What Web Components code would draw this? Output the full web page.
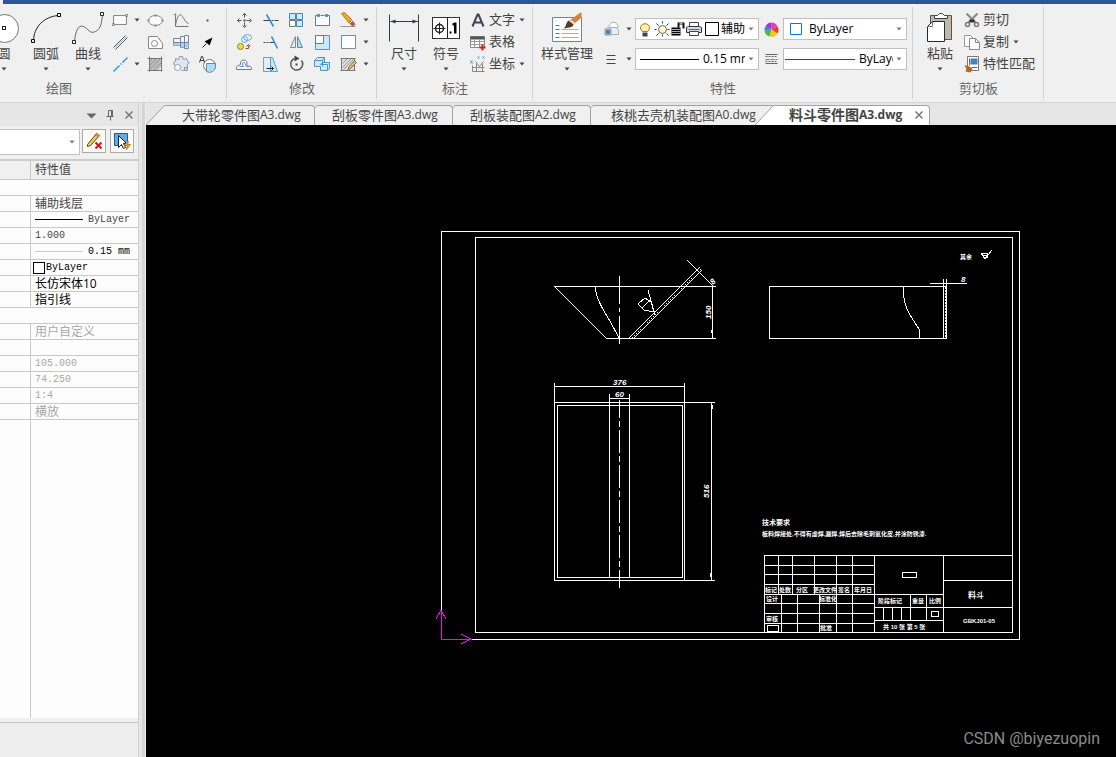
<!DOCTYPE html>
<html lang="zh-CN">
<head>
<meta charset="utf-8">
<title>料斗零件图A3.dwg</title>
<style>
html,body{margin:0;height:100%}
body{font-family:"Open Sans","Noto Sans CJK SC",sans-serif;font-size:13px;color:#444;background:#f0f0f0}
</style>
</head>
<body>
<cad-app></cad-app>
<script>
const ICONS = {
/* large ribbon icons, 32 x 32 */
circle:[32,`<circle cx="16" cy="16" r="14" fill="#fff" stroke="#777"/><rect x="14" y="14" width="3" height="3" fill="#fff" stroke="#222"/>`],
arc:[32,`<path d="M3 29C3 14 14 4 28 3" fill="none" stroke="#222"/><path d="M1 27h3v3h-3zM27 1h3v3h-3z" fill="#fff" stroke="#000"/>`],
curve:[32,`<path d="M2 29C3 18 6 12 11 14s6 8 12 5S29 9 30 3" fill="none" stroke="#666"/><path d="M0 28h3v3h-3zM28 0h3v3h-3z" fill="#fff" stroke="#222"/>`],
dimension:[32,`<path d="M1 2v27M30 2v27M2 9h28" fill="none" stroke="#333c50"/><path d="M2 9l5-2v4zM29 9l-5-2v4z" fill="#333c50"/>`],
symbol:[32,`<rect x="2" y="5" width="27" height="21" fill="#fff" stroke="#333"/><path d="M17 5v21M3 16h12M9 10v12" stroke="#222"/><circle cx="9" cy="16" r="4" fill="none" stroke="#222" stroke-width="1.5"/><path d="M19 19h2v2h-2zM24 10h2v11h-2.500v-8h-1.500v-2z" fill="#000"/>`],
style:[32,`<path d="M1 5h29v24h-29z" fill="#fff" stroke="#6684a8"/><path d="M4 13h4M4 17h4M4 21h4M4 25h4" stroke="#58779c"/><path d="M10 17h17M10 21h17M10 25h17" stroke="#9eaecb"/><path d="M18 8L29 0l1 1v4l-8 7z" fill="#d8813b"/><path d="M17 8l5 4-1 2-3 1-6 1c3-2 2-5 5-8z" fill="#5f351d"/><path d="M19 8l4 3" stroke="#dce4ea" stroke-width="2"/>`],
paste:[32,`<path d="M6 3h21v24H6z" fill="#c1b8a8" stroke="#555"/><path d="M10 3h3l2-2h3l2 2h3v3H10z" fill="#fff" stroke="#444"/><path d="M8 9h12v20H3V14z" fill="#fff" stroke="#222c40"/><path d="M8 9v5H3" fill="none" stroke="#777"/>`],
/* small icons, 20 x 20 */
rect:[20,`<path d="M3 5h13v9H3z" fill="#fafafa" stroke="#888"/><path d="M15 4h2v2h-2zM2 13h2v2H2z" fill="#fff" stroke="#888"/>`],
dline:[20,`<path d="M3 15L15 3M5 17L17 5" stroke="#555b66"/><path d="M4 16L16 4" stroke="#bbb"/>`],
axis:[20,`<path d="M3 17l6-6M10 10l1-1M12 8l5-5" stroke="#1fa6e0" stroke-width="1.500"/>`],
ellipse:[20,`<ellipse cx="10" cy="10" rx="7" ry="5" fill="#fafafa" stroke="#888"/><path d="M9 4h2v2H9zM2 9h2v2H2zM9 14h2v2H9zM16 9h2v2h-2z" fill="#888"/>`],
hole:[20,`<path d="M3 4h9l5 7v5H3z" fill="#fff" stroke="#888"/><circle cx="9" cy="11" r="3" fill="#fff" stroke="#888"/>`],
hatch:[20,`<path d="M4 4h12v8l-4 4H4z" fill="#bbb"/><path d="M4 7l3-3M4 11l7-7M4 15l11-11M8 16l8-8" stroke="#999"/><path d="M2 4h15M2 16h15M4 2v15M16 2v15" stroke="#777"/>`],
wave:[20,`<path d="M4 3v13h13" fill="none" stroke="#777"/><path d="M4 15C6 3 9 3 11 6s3 6 6 7" fill="none" stroke="#777"/><path d="M2 4h3" stroke="#999"/>`],
shaft:[20,`<path d="M2 6h7V4h4V3h4v13h-4v-1H9v-2H2z" fill="#eef4fa" stroke="#77869a"/><path d="M2 10h15v5h-8l-1-2H2z" fill="#acd0ef"/><path d="M2 10h15M9 5v10M13 4v12" stroke="#77869a"/>`],
gear:[20,`<path d="M3 11l-1-3 2-1V4l3 1 1-3h3l1 3 3-1 1 3 2 1-2 2v3h-3v3h-3" fill="#dfe4f2" stroke="#929aaa"/><circle cx="6" cy="13" r="3" fill="#fff" stroke="#929aaa"/><path d="M13 13h3v3h-3z" fill="#cfd6e6" stroke="#929aaa"/>`],
point:[20,`<path d="M9 9h2v2H9z" fill="#555b6a"/>`],
arrow:[20,`<path d="M5 15l4-4" stroke="#222"/><path d="M15 5l-3 8-2-2-3-2z" fill="#000"/>`],
detail:[20,`<circle cx="12" cy="11" r="6" fill="#fff" stroke="#777"/><path d="M9 9h9v3a6 6 0 0 1-9 5z" fill="#ade0f6" stroke="#6688a8"/><path d="M2 8L4 2h1l2 6M3 6h3" fill="none" stroke="#333"/>`],
move:[20,`<path d="M10 3v4M10 12v4M3 10h4M12 10h4M8 5l2-2 2 2M8 15l2 2 2-2M5 8l-2 2 2 2M15 8l2 2-2 2" fill="none" stroke="#555"/><path d="M9 9h2v2H9z" fill="#444"/>`],
trim:[20,`<path d="M3 10h7M11 10h2M14 10h4" stroke="#444"/><path d="M6 4l7 12" stroke="#1d8fe0" stroke-width="1.500"/>`],
extend:[20,`<path d="M3 10h2M6 10h2M9 10h5" stroke="#444"/><path d="M11 4l6 12" stroke="#1d8fe0" stroke-width="1.500"/>`],
array:[20,`<path d="M3 3h6v6H3zM10 3h6v6h-6zM10 10h6v6h-6z" fill="#cdecfb" stroke="#3b8bc0"/><path d="M3 10h6v6H3z" fill="#fff" stroke="#777"/>`],
brk:[20,`<path d="M5 5H3v10h14V5h-2M8 5h4" fill="#fff" stroke="#777"/><path d="M5 4h2v2H5zM13 4h2v2h-2z" fill="#2f96e0" stroke="#2f96e0"/>`],
erase:[20,`<path d="M2 16h15" stroke="#999"/><path d="M3 3l3-1 8 8-3 3z" fill="#f2aa25" stroke="#b97a14"/><path d="M11 10l4 1 2 3-3 2-3-3z" fill="#a95b55"/><path d="M11 13l3-3" stroke="#eee"/>`],
copy3:[20,`<circle cx="6" cy="14" r="3" fill="#f7e800" stroke="#777"/><ellipse cx="10" cy="7" rx="3" ry="3" fill="#dff4ff" stroke="#67a9d0"/><ellipse cx="13" cy="5" rx="4" ry="3" fill="none" stroke="#67a9d0"/><path d="M11 16h3v-3M12 14l2-2 2 2" fill="none" stroke="#b33"/>`],
mirror:[20,`<path d="M9 4v11H4z" fill="#e9e9e9" stroke="#888"/><path d="M11 4v11h5z" fill="#b5dcf2" stroke="#5c8ba8"/>`],
scale:[20,`<path d="M3 3h14v14H3z" fill="#c9eafa" stroke="#4e97c2"/><path d="M3 3h8v8H3z" fill="#fff" stroke="#777"/>`],
stretch:[20,`<path d="M3 3h14v13H3z" fill="#fff" stroke="#889"/><path d="M3 3h14M3 3v13" stroke="#3c9de0" stroke-dasharray="2 1"/>`],
offset:[20,`<path d="M2 15h15c1-4-4-3-5-4 3-6-7-8-6-1-2 1-5 1-4 5z" fill="#eef6ff" stroke="#778"/><path d="M5 12h4c-3-4 1-6 2-2 0 2 2 3 3 2" fill="none" stroke="#4e97c2"/>`],
chamfer:[20,`<path d="M3 3h7v14H3z" fill="#ddeffc" stroke="#999"/><path d="M10 3h2l5 14h-7z" fill="#c9e9fb" stroke="#4ca4dc"/><path d="M6 14h7M11 12l2 2-2 2" fill="none" stroke="#222"/>`],
rotate:[20,`<path d="M8 4a6 6 0 1 0 7 2" fill="none" stroke="#555" stroke-width="1.500"/><path d="M8 1l5 3-5 3z" fill="#444"/><path d="M9 9h2v2H9z" fill="#444"/>`],
block:[20,`<path d="M2 6l3-3h7v5h5v6l-2 2H8v-4H2z" fill="#c9eafa" stroke="#4e97c2"/><path d="M2 6h8v6M8 10l2-2h7M8 10h7v6M10 6l2-3" fill="none" stroke="#4e97c2"/>`],
hedit:[20,`<path d="M3 4h13v12H3z" fill="#ddd" stroke="#777"/><path d="M4 9l5-5M4 13l9-9M5 15l11-11M9 15l7-7" stroke="#999"/><path d="M2 4h15M2 16h15" stroke="#777"/><path d="M10 13l6-7 2 2-6 6-2 1z" fill="#f0bd57" stroke="#765"/>`],
bigA:[20,`<path d="M4 16L9 4h1l5 12M6 12h7" fill="none" stroke="#3b4557" stroke-width="2"/>`],
table:[20,`<path d="M2 4h14v11H2z" fill="#fff" stroke="#888"/><path d="M2 4h14v3H2z" fill="#555"/><path d="M2 9h14M2 12h14M6 7v8M11 7v8" stroke="#999"/><path d="M11 15h6M14 12v6" stroke="#c22" stroke-width="2"/>`],
coord:[20,`<path d="M4 11v6h12M8 9v8M14 9v8M4 13h12M7 7l4 5 4-5" fill="none" stroke="#888"/><path d="M2 6l2 3M4 6l-2 3M9 2l2 2M11 2l-2 2M14 2l2 2M16 2l-2 2" stroke="#4699d0"/>`],
layers:[20,`<path d="M6 8l4-5h4l3 4-4 4H8z" fill="#fff" stroke="#a8adb5"/><path d="M7 8h8l2 3v4h-7" fill="#eee" stroke="#a8adb5"/><path d="M3 9h7v7H3z" fill="#8aa6c0"/><path d="M5 11h3v3H5z" fill="#3476a8"/>`],
lines:[20,`<path d="M5 6h9M5 10h9M5 14h9" stroke="#444"/>`],
wheel:[20,`<path d="M10 10L10 3A7 7 0 0 1 16 7z" fill="#e83ab4"/><path d="M10 10L4 7A7 7 0 0 1 10 3z" fill="#9d39d8"/><path d="M10 10L16 7A7 7 0 0 1 16 14z" fill="#e83b30"/><path d="M10 10L16 14A7 7 0 0 1 8 17z" fill="#f7c51c"/><path d="M10 10L8 17A7 7 0 0 1 3 11z" fill="#4fba42"/><path d="M10 10L3 11A7 7 0 0 1 4 7z" fill="#3182df"/>`],
dashes:[20,`<path d="M4 5h12M4 14h12" stroke="#666"/><path d="M4 7h12M4 12h12" stroke="#666" stroke-dasharray="2 1"/><path d="M4 10h12" stroke="#777" stroke-dasharray="4 1"/>`],
cut:[20,`<path d="M4 3l9 9M15 3l-9 9" stroke="#888" stroke-width="2"/><path d="M7 9h5v3H7z" fill="#333"/><circle cx="5" cy="14" r="2" fill="none" stroke="#777" stroke-width="1.500"/><circle cx="14" cy="14" r="2" fill="none" stroke="#777" stroke-width="1.500"/>`],
copy:[20,`<path d="M2 3h6l3 3v8H2z" fill="#fff" stroke="#999"/><path d="M7 6h6l4 4v7H7z" fill="#fff" stroke="#889"/><path d="M13 6v4h4" fill="none" stroke="#889"/>`],
match:[20,`<path d="M5 2h11v14H5z" fill="#fff" stroke="#777"/><path d="M8 4h7v6H8z" fill="#477fb8"/><path d="M7 4v7M9 13h6" stroke="#667"/><path d="M2 11h3l5 3-2 4-5-1 1-3z" fill="#b9651b"/>`],
bulb:[20,`<path d="M7 12C5 10 5 9 5 7a5 5 0 0 1 9 0c0 2 0 3-2 5z" fill="#ffefa8" stroke="#8c7a43"/><path d="M7 13h5v4H7z" fill="#444"/>`],
sun:[20,`<circle cx="10" cy="10" r="4" fill="#fff6cc" stroke="#666"/><path d="M10 2v2M10 15v2M2 10h2M15 10h2M4 4l2 2M14 14l2 2M16 4l-2 2M6 14l-2 2" stroke="#333"/>`],
lock:[20,`<path d="M3 8h9v8H3z" fill="#000"/><path d="M3 10h9M3 12h9M3 14h9" stroke="#c8be00"/><path d="M10 8V4h5v5" fill="none" stroke="#111" stroke-width="2"/><path d="M11 4h3" stroke="#d8cd00"/>`],
printer:[20,`<path d="M5 3h9v4H5z" fill="#fff" stroke="#444"/><path d="M2 8l2-1h11l2 1v5H2z" fill="#d4d8df" stroke="#333"/><path d="M5 12h9v4H5z" fill="#fff" stroke="#444"/><path d="M4 10h11" stroke="#667"/>`],
white:[20,`<path d="M3 3h13v13H3z" fill="#fff" stroke="#000"/>`],
blue:[20,`<path d="M4 4h11v11H4z" fill="#fff" stroke="#0078d7"/>`],
pen:[20,`<path d="M3 13L12 2l3 2-9 10-3 1z" fill="#f4cb4d" stroke="#5d461c"/><path d="M11 4l2-2 3 2-2 2z" fill="#c08a6a"/><path d="M11 11l6 6M17 11l-6 6" stroke="#d01818" stroke-width="2"/>`],
pick:[20,`<path d="M2 2h13v12H2z" fill="#62aae8" stroke="#1c5d9e"/><path d="M6 4v12l3-3 2 4 2-1-2-4h3z" fill="#fff" stroke="#222"/><path d="M15 10l-3 4h3l-1 4 4-5h-3l1-3z" fill="#ffc23b" stroke="#c07a10"/>`],
down:[20,`<path d="M5 8h10l-5 5z" fill="#666"/>`],
pin:[20,`<path d="M8 5h4v6H8zM6 11h7M10 11v4" fill="none" stroke="#666"/><path d="M11 5v6" stroke="#666"/>`],
close:[20,`<path d="M6 6l7 7M13 6l-7 7" stroke="#777" stroke-width="1.500"/>`],
caret:[6,`<path d="M0 1h5L2.500 4z" fill="#444"/>`]
};

function define(name, markup, setup){
  const template = document.createElement('template');
  template.innerHTML = markup;
  customElements.define(name, class extends HTMLElement{
    constructor(){
      super();
      this.attachShadow({mode:'open'}).append(template.content.cloneNode(true));
    }
    connectedCallback(){ if(setup) setup(this, this.shadowRoot); }
  });
}

/* The viewBox starts half a unit early so one-pixel strokes fall on whole pixels. */
define('cad-icon', `<style>:host{display:block;flex:none;line-height:0}svg{display:block}</style><span></span>`, (el, root) => {
  const [size, body] = ICONS[el.getAttribute('name')];
  root.querySelector('span').innerHTML = `<svg width="${size}" height="${size}" viewBox="-0.5 -0.5 ${size} ${size}" aria-hidden="true">${body}</svg>`;
});

const BUTTON = `button{font:inherit;color:inherit;background:none;border:0;padding:0;margin:0;white-space:nowrap}`;

define('big-tool', `<style>:host{display:block;width:42px;flex:none}${BUTTON}
button{display:flex;flex-direction:column;align-items:center;width:100%;line-height:18px;padding-top:3px}
.text{margin:0 0 4px}</style>
<button type="button"><span class="pic"></span><span class="text"><slot></slot></span><cad-icon name="caret"></cad-icon></button>`, (el, root) => {
  root.querySelector('.pic').innerHTML = `<cad-icon name="${el.getAttribute('icon')}"></cad-icon>`;
});

define('icon-tool', `<style>:host{display:block}${BUTTON}
button{display:flex;align-items:center;justify-content:center;width:100%;height:100%}</style>
<button type="button"></button>`, (el, root) => {
  const b = root.querySelector('button');
  b.setAttribute('aria-label', el.getAttribute('label'));
  b.innerHTML = `<cad-icon name="${el.getAttribute('icon')}"></cad-icon>`;
});

define('text-tool', `<style>:host{display:block}${BUTTON}
button{display:flex;align-items:center;height:22px}
.text{margin:0 4px 2px 1px;line-height:18px}</style>
<button type="button"><span class="pic"></span><span class="text"><slot></slot></span><span class="more"></span></button>`, (el, root) => {
  root.querySelector('.pic').innerHTML = `<cad-icon name="${el.getAttribute('icon')}"></cad-icon>`;
  if(el.hasAttribute('menu')) root.querySelector('.more').innerHTML = `<cad-icon name="caret"></cad-icon>`;
});

define('ribbon-group', `<style>:host{display:flex;flex-direction:column;box-sizing:border-box;flex:none;padding-top:5px;position:relative}
.tools{display:flex;height:70px;align-items:flex-start}
h2{margin:0;font-size:13px;font-weight:400;line-height:18px;text-align:center;color:#666}
.rule{position:absolute;right:0;top:3px;bottom:3px;width:1px;background:#d2d2d2}</style>
<div class="tools"><slot></slot></div><h2><slot name="title"></slot></h2><i class="rule"></i>`);

define('prop-combo', `<style>:host{display:flex;align-items:center;box-sizing:border-box;height:22px;border:1px solid #c0c0c0;background:#fff;overflow:hidden;padding-right:4px;min-width:0}
select{appearance:none;flex:1;min-width:0;width:0;border:0;padding:0;margin:0;background:none;font:inherit;font-size:12px;color:#000;height:20px;overflow:hidden;text-overflow:clip}
.lead{display:flex;align-items:center;flex:none}
.arrow{margin-left:3px;opacity:.7}</style>
<span class="lead"><slot></slot></span><select><option></option></select><cad-icon class="arrow" name="caret"></cad-icon>`, (el, root) => {
  root.querySelector('select').setAttribute('aria-label', el.getAttribute('label'));
  root.querySelector('option').textContent = el.getAttribute('value') || '';
});

define('cad-ribbon', `<style>
:host{display:flex;height:98px;background:#f0f0f0;border-bottom:1px solid #d4d4d4;overflow:hidden}
.draw{width:227px}.draw span{margin-right:109px}
.first{margin-left:-17px}
.grid{display:grid;grid-auto-rows:22px}
.g1{grid-template-columns:22px 11px repeat(3,26px)}
.g2{grid-template-columns:repeat(5,26px) 9px;margin-left:4px}
.edit{width:150px}.note{width:156px}.props{width:380px}.clip{width:131px}
.note big-tool:first-child,.clip big-tool{margin-left:6px}
.stack{margin-left:1px}
.props big-tool{width:60px;margin-left:4px}
.fields{display:grid;grid-template-columns:22px 13px 124px 24px 124px;grid-auto-rows:22px;row-gap:8px;margin:9px 0 0 3px}
.tight{width:16px;overflow:hidden;display:flex;justify-content:center}
.tight.bulb{width:18px}
.tight.box{width:19px}
.line{width:59px;height:1px;background:#000;margin:0 4px}
.line.red{width:70px;background:#e00000;margin:0 4px 0 1px}
.blue{margin:0 3px 0 2px}
</style>
<ribbon-group class="draw">
 <big-tool class="first" icon="circle">圆</big-tool><big-tool icon="arc">圆弧</big-tool><big-tool icon="curve">曲线</big-tool>
 <div class="grid g1">
  <icon-tool icon="rect" label="矩形"></icon-tool><icon-tool icon="caret" label="矩形选项"></icon-tool><icon-tool icon="ellipse" label="椭圆"></icon-tool><icon-tool icon="wave" label="公式曲线"></icon-tool><icon-tool icon="point" label="点"></icon-tool>
  <icon-tool icon="dline" label="平行线"></icon-tool><span></span><icon-tool icon="hole" label="孔"></icon-tool><icon-tool icon="shaft" label="轴"></icon-tool><icon-tool icon="arrow" label="箭头"></icon-tool>
  <icon-tool icon="axis" label="中心线"></icon-tool><icon-tool icon="caret" label="中心线选项"></icon-tool><icon-tool icon="hatch" label="剖面线"></icon-tool><icon-tool icon="gear" label="齿轮"></icon-tool><icon-tool icon="detail" label="局部放大"></icon-tool>
 </div>
 <span slot="title">绘图</span>
</ribbon-group>
<ribbon-group class="edit">
 <div class="grid g2">
  <icon-tool icon="move" label="平移"></icon-tool><icon-tool icon="trim" label="裁剪"></icon-tool><icon-tool icon="array" label="阵列"></icon-tool><icon-tool icon="brk" label="打断"></icon-tool><icon-tool icon="erase" label="删除"></icon-tool><icon-tool icon="caret" label="删除选项"></icon-tool>
  <icon-tool icon="copy3" label="平移复制"></icon-tool><icon-tool icon="extend" label="延伸"></icon-tool><icon-tool icon="mirror" label="镜像"></icon-tool><icon-tool icon="scale" label="缩放"></icon-tool><icon-tool icon="stretch" label="拉伸"></icon-tool><icon-tool icon="caret" label="拉伸选项"></icon-tool>
  <icon-tool icon="offset" label="等距线"></icon-tool><icon-tool icon="chamfer" label="过渡"></icon-tool><icon-tool icon="rotate" label="旋转"></icon-tool><icon-tool icon="block" label="块"></icon-tool><icon-tool icon="hedit" label="填充编辑"></icon-tool><icon-tool icon="caret" label="填充选项"></icon-tool>
 </div>
 <span slot="title">修改</span>
</ribbon-group>
<ribbon-group class="note">
 <big-tool icon="dimension">尺寸</big-tool><big-tool icon="symbol">符号</big-tool>
 <div class="stack"><text-tool icon="bigA" menu>文字</text-tool><text-tool icon="table">表格</text-tool><text-tool icon="coord" menu>坐标</text-tool></div>
 <span slot="title">标注</span>
</ribbon-group>
<ribbon-group class="props">
 <big-tool icon="style">样式管理</big-tool>
 <div class="fields">
  <icon-tool icon="layers" label="图层"></icon-tool><icon-tool icon="caret" label="图层选项"></icon-tool>
  <prop-combo label="当前图层" value="辅助线层"><span class="tight bulb"><cad-icon name="bulb"></cad-icon></span><span class="tight"><cad-icon name="sun"></cad-icon></span><span class="tight"><cad-icon name="lock"></cad-icon></span><span class="tight"><cad-icon name="printer"></cad-icon></span><span class="tight box"><cad-icon name="white"></cad-icon></span></prop-combo>
  <icon-tool icon="wheel" label="颜色"></icon-tool>
  <prop-combo label="当前颜色" value="ByLayer"><cad-icon class="blue" name="blue"></cad-icon></prop-combo>
  <icon-tool icon="lines" label="线宽"></icon-tool><icon-tool icon="caret" label="线宽选项"></icon-tool>
  <prop-combo label="当前线宽" value="0.15 mm"><span class="line"></span></prop-combo>
  <icon-tool icon="dashes" label="线型"></icon-tool>
  <prop-combo label="当前线型" value="ByLayer"><span class="line red"></span></prop-combo>
 </div>
 <span slot="title">特性</span>
</ribbon-group>
<ribbon-group class="clip">
 <big-tool icon="paste">粘贴</big-tool>
 <div class="stack"><text-tool icon="cut">剪切</text-tool><text-tool icon="copy" menu>复制</text-tool><text-tool icon="match">特性匹配</text-tool></div>
 <span slot="title">剪切板</span>
</ribbon-group>`);

define('property-panel', `<style>
:host{display:flex;flex-direction:column;width:138px;background:#f0f0f0;border-right:1px solid #d0d0d0}
header{display:flex;justify-content:flex-end;height:23px;background:#e6e6e6;align-items:center}
header icon-tool{width:19px;height:20px}
.bar{display:flex;height:33px;align-items:flex-start;padding-top:3px;box-sizing:border-box}
.bar prop-combo{width:80px;height:26px;border-left:0}
.bar icon-tool{width:22px;height:22px;border:1px solid #aaa;background:#fbfbfb;margin:0 2px}
table{width:100%;border-collapse:separate;border-spacing:0;table-layout:fixed;background:#fdfdfd;border-top:2px solid #ccc;color:#444;font-size:12px}
col:first-child{width:31px}
th,td{padding:0;border-bottom:1px solid #c8c8c8;height:15px;line-height:15px;text-align:left;font-weight:400;white-space:nowrap;overflow:hidden}
th{height:18px;line-height:18px;background:#f0f0f0}
th:first-child,td.n{border-right:1px solid #c8c8c8}
th+th{padding-left:4px}
td+td{padding-left:4px}
.m{font-family:"Liberation Mono",monospace;font-size:10px}
.k{color:#000}.g{color:#a8a8a8}
.row{display:flex;align-items:center;gap:5px}
.ln{width:48px;height:1px;background:#000}.ln.l{background:#ccc}
.sw{width:10px;height:10px;border:1px solid #000;background:#fff;margin-left:-2px;margin-right:-4px}
.rest{flex:1;display:flex;background:#fdfdfd}
.rest i{width:30px;border-right:1px solid #c8c8c8}
footer{height:34px;background:#eee;border-top:1px solid #c4c4c4;margin-top:4px}
</style>
<header><icon-tool icon="down" label="菜单"></icon-tool><icon-tool icon="pin" label="固定"></icon-tool><icon-tool icon="close" label="关闭"></icon-tool></header>
<div class="bar"><prop-combo label="选择对象"></prop-combo><icon-tool icon="pen" label="清除选择"></icon-tool><icon-tool icon="pick" label="快速选择"></icon-tool></div>
<table><colgroup><col><col></colgroup>
<thead><tr><th></th><th>特性值</th></tr></thead>
<tbody>
<tr><td colspan="2"></td></tr>
<tr><td class="n"></td><td>辅助线层</td></tr>
<tr><td class="n"></td><td class="m"><div class="row"><span class="ln"></span>ByLayer</div></td></tr>
<tr><td class="n"></td><td class="m">1.000</td></tr>
<tr><td class="n"></td><td class="m k"><div class="row"><span class="ln l"></span>0.15 mm</div></td></tr>
<tr><td class="n"></td><td class="m k"><div class="row"><span class="sw"></span>ByLayer</div></td></tr>
<tr><td class="n"></td><td class="k">长仿宋体10</td></tr>
<tr><td class="n"></td><td class="k">指引线</td></tr>
<tr><td colspan="2"></td></tr>
<tr><td class="n"></td><td class="g">用户自定义</td></tr>
<tr><td class="n"></td><td></td></tr>
<tr><td class="n"></td><td class="m g">105.000</td></tr>
<tr><td class="n"></td><td class="m g">74.250</td></tr>
<tr><td class="n"></td><td class="m g">1:4</td></tr>
<tr><td class="n"></td><td class="g">横放</td></tr>
</tbody></table>
<div class="rest"><i></i></div><footer></footer>`);

define('doc-tab', `<style>
:host{display:flex;height:20px;flex:none;box-sizing:border-box;--fill:#f0f0f0}
${BUTTON}
svg{display:none;flex:none}
button.tab{flex:1;display:flex;align-items:center;background:var(--fill);border:1px solid #a2a2a2;border-bottom:0;border-left-width:0;border-radius:4px 4px 0 0;line-height:16px;padding:0 0 2px 17px;font-size:13px}
.ext{font-size:12px}
:host([slant]) svg{display:block}
:host([slant]) button.tab{border-top-left-radius:0;padding-left:16px}
:host([wide]) button.tab{padding-left:20px}
:host([active]){--fill:#fff;position:relative;font-weight:700}
:host([active]) button.tab{font-size:14px;padding-left:14px}
</style>
<svg width="20" height="20" viewBox="0 0 20 20"><path d="M0 20L18 1h2v19z" fill="var(--fill)"/><path d="M0 20L17 2Q18 0.500 20 0.500" fill="none" stroke="#a2a2a2"/></svg>
<button type="button" class="tab"><slot></slot><span class="ext"><slot name="ext"></slot></span><slot name="close"></slot></button>`);

define('doc-tabs', `<style>
:host{display:flex;height:22px;box-sizing:border-box;background:#e6e6e6;padding-top:2px;overflow:hidden}
.a{width:169px}.b{width:138px}.d{width:184px}.e{width:173px;margin-left:-20px}
cad-icon{margin-left:7px}
</style>
<doc-tab class="a" slant>大带轮零件图<span slot="ext">A3.dwg</span></doc-tab>
<doc-tab class="b">刮板零件图<span slot="ext">A3.dwg</span></doc-tab>
<doc-tab class="b">刮板装配图<span slot="ext">A2.dwg</span></doc-tab>
<doc-tab class="d" wide>核桃去壳机装配图<span slot="ext">A0.dwg</span></doc-tab>
<doc-tab class="e" slant active>料斗零件图<span slot="ext">A3.dwg</span><cad-icon slot="close" name="close"></cad-icon></doc-tab>`);

define('cad-canvas', `<style>
:host{display:block;position:relative;background:#000;overflow:hidden;min-height:0}
svg{display:block;width:100%;height:100%}
.l{fill:none;stroke:#fff;shape-rendering:crispEdges}
text{fill:#fff;font-family:"Liberation Sans","Noto Sans CJK SC",sans-serif;font-size:6px;font-weight:700}
.dim{font-size:8px;font-style:italic}
.head{font-size:7px}.name{font-size:8px}
p{position:absolute;right:16px;bottom:7px;margin:0;font-family:Roboto,sans-serif;font-size:16px;line-height:22px;color:#8c8c8c}
</style>
<svg viewBox="146 125 970 632" preserveAspectRatio="xMinYMin meet" role="img" aria-label="料斗零件图">
<g class="l">
 <path d="M441 231H1019V639H441zM475 237H1012V632H475z"/>
 <path d="M554 286H716M606 338H716M554 286L606 338M595 286Q596 298 604 311T619 338M712 286V338M713 286L687 260"/>
 <path d="M619 276V304M619 308V312M619 316V344"/>
 <path d="M629 338L700 267M634 338L702 270"/>
 <path d="M632 338L701 269" stroke-dasharray="1 2"/>
 <path d="M648 290L655 315M638 304L645 298L651 302L654 312L644 310zM642 308L650 300"/>
 <path d="M769 286H946V338H769zM943 279V338M946 279V286M930 283H967M903 286Q903 304 910 315T919 329V338"/>
 <path d="M945 287V338" stroke-dasharray="2 1"/>
 <path d="M554 402H715M554 580H715M554 383V580M684 383V580M557 405H682V577H557zM554 386H684M609 394V577M629 394V577M609 398H629M711 402V580"/>
 <path d="M712 405V409M710 573V577M711 330V333"/>
 <path d="M619 400V588" stroke-dasharray="18 3 6 3 23 3 6 3 23 3 6 3 23 3 6 3 23 3 6 3 30"/>
 <path d="M981 253H988L985 259zM985 259L992 250M983 255H987V257H983z"/>
 <path d="M764 555H1012M764 555V632M764 565H874M764 574H874M764 584H874M764 594H943M764 603H874M764 613H874M764 623H874M778 555V594M792 555V594M814 555V594M836 555V632M852 555V632M874 555V632M781 594V632M797 594V632M819 594V632M943 555V632M943 580H1012M874 607H1012M874 620H943M910 594V620M926 594V620M883 607V620M892 607V620M901 607V620"/>
 <path d="M902 572H916V577H902zM931 611H938V616H931zM767 625H778V631H767z"/>
 <path d="M441 610V639H472M436 619L441 610L446 619M461 634L471 639L461 644" stroke="#f0f"/>
</g>
<g>
 <text class="dim" x="613" y="385">376</text><text class="dim" x="615" y="397">60</text>
 <text class="dim" transform="translate(711 319) rotate(-90)">150</text>
 <text class="dim" transform="translate(709 498) rotate(-90)">516</text>
 <text class="dim" transform="translate(713 285) rotate(-45)">8</text>
 <text class="dim" x="961" y="282">8</text>
 <text x="960" y="259">其余</text>
 <text class="head" x="762" y="525">技术要求</text>
 <text x="762" y="536">板料焊接处,不得有虚焊,漏焊,焊后去除毛刺氧化皮,并涂防锈漆.</text>
 <text x="765" y="592">标记</text><text x="779" y="592">处数</text><text x="796" y="592">分区</text><text x="813" y="592">更改文件</text><text x="838" y="592">签名</text><text x="854" y="592">年月日</text>
 <text x="766" y="601">设计</text><text x="819" y="601">标准化</text><text x="766" y="621">审核</text><text x="820" y="630">批准</text>
 <text x="878" y="603">阶段标记</text><text x="912" y="603">重量</text><text x="929" y="603">比例</text>
 <text x="883" y="629">共 10 张 第 5 张</text>
 <text class="name" x="968" y="598">料斗</text>
 <text x="963" y="623">GBKJ01-05</text>
</g>
</svg>
<p>CSDN @biyezuopin</p>`);

define('cad-app', `<style>
:host{display:grid;grid-template-rows:4px 99px 1fr;grid-template-columns:minmax(0,1fr);height:100vh;line-height:18px}
.title{background:#2b579a;margin-left:3px}
main{display:grid;grid-template-columns:139px 7px minmax(0,1fr);min-height:0}
.split{background:#d6d6d6;border-left:3px solid #e6e6e6;border-right:1px solid #eee}
.doc{display:grid;grid-template-rows:22px minmax(0,1fr);min-height:0}
</style>
<div class="title"></div><cad-ribbon></cad-ribbon>
<main><property-panel></property-panel><div class="split"></div><section class="doc"><doc-tabs></doc-tabs><cad-canvas></cad-canvas></section></main>`);
</script>
</body>
</html>
